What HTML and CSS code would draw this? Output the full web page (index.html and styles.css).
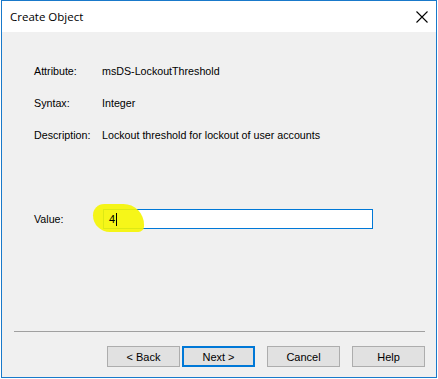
FILE: index.html
```html
<!DOCTYPE html>
<html lang="en">
<head>
    <meta charset="UTF-8">
    <title>Create Object</title>
    <link rel="stylesheet" href="styles.css">
</head>
<body>
    <div class="window">
        <div class="titlebar">
            <span class="title">Create Object</span>
            <svg class="close" width="12" height="12" viewBox="0 0 12 12">
                <path d="M0.5 0.5 L11.5 11.5 M11.5 0.5 L0.5 11.5" stroke="#000" stroke-width="1.1" fill="none"/>
            </svg>
        </div>

        <div class="content">
            <div class="info">
                <div class="row"><span class="label">Attribute:</span><span>msDS-LockoutThreshold</span></div>
                <div class="row"><span class="label">Syntax:</span><span>Integer</span></div>
                <div class="row"><span class="label">Description:</span><span>Lockout threshold for lockout of user accounts</span></div>
            </div>

            <div class="value-row">
                <span class="label">Value:</span>
                <div class="input-wrap">
                    <div class="highlight"></div>
                    <div class="input"><span class="typed">4</span><span class="caret"></span></div>
                </div>
            </div>
        </div>

        <div class="footer">
            <div class="separator"></div>
            <div class="buttons">
                <button>&lt; Back</button>
                <button class="default">Next &gt;</button>
                <button class="gap">Cancel</button>
                <button class="gap">Help</button>
            </div>
        </div>
    </div>
</body>
</html>
```

FILE: styles.css
```css
* {
    margin: 0;
    padding: 0;
    box-sizing: border-box;
}

body {
    background: white;
    width: 438px;
    height: 379px;
    overflow: hidden;
    font-family: "Liberation Sans", Arial, sans-serif;
    font-size: 10.7px;
    color: #000;
}

.window {
    margin-left: 1px;
    width: 436px;
    height: 378px;
    border: 1px solid #1979ca;
    background: #f0f0f0;
    display: flex;
    flex-direction: column;
}

.titlebar {
    height: 31px;
    background: white;
    display: flex;
    align-items: center;
    justify-content: space-between;
    padding: 0 8px 0 8px;
}

.title {
    font-family: "Open Sans", "Noto Sans", sans-serif;
    font-size: 11.5px;
    margin-top: -1px;
}

.close {
    margin-top: 1px;
}

.content {
    flex: 1;
    padding: 33px 0 0 32px;
}

.info {
    display: flex;
    flex-direction: column;
    gap: 19px;
}

.row {
    display: flex;
    height: 13px;
    line-height: 13px;
}

.label {
    width: 68px;
    flex-shrink: 0;
}

.value-row {
    display: flex;
    align-items: center;
    margin-top: 67px;
}

.input-wrap {
    position: relative;
    margin-left: 1px;
}

.input {
    position: relative;
    width: 270px;
    height: 20px;
    border: 1px solid #0078d7;
    background: white;
    display: flex;
    align-items: center;
    padding-left: 5px;
}

.highlight {
    position: absolute;
    left: -10px;
    top: -5px;
    width: 51px;
    height: 28px;
    background: #f5f500;
    border-radius: 12px 22px 6px 18px;
    z-index: 2;
    opacity: 0.9;
}

.typed {
    position: relative;
    z-index: 3;
    font-size: 11px;
}

.caret {
    position: relative;
    z-index: 3;
    width: 1px;
    height: 13px;
    background: #000;
    margin-left: 1px;
}

.footer {
    padding: 0 11px 10px 12px;
}

.separator {
    height: 1px;
    background: #a0a0a0;
    margin-bottom: 14px;
}

.buttons {
    display: flex;
    justify-content: flex-end;
    gap: 2px;
}

button {
    width: 73px;
    height: 21px;
    background: #e1e1e1;
    border: 1px solid #adadad;
    font-family: "Liberation Sans", Arial, sans-serif;
    font-size: 11px;
    color: #000;
}

button.default {
    border: 2px solid #0078d7;
}

button.gap {
    margin-left: 10px;
}
```
